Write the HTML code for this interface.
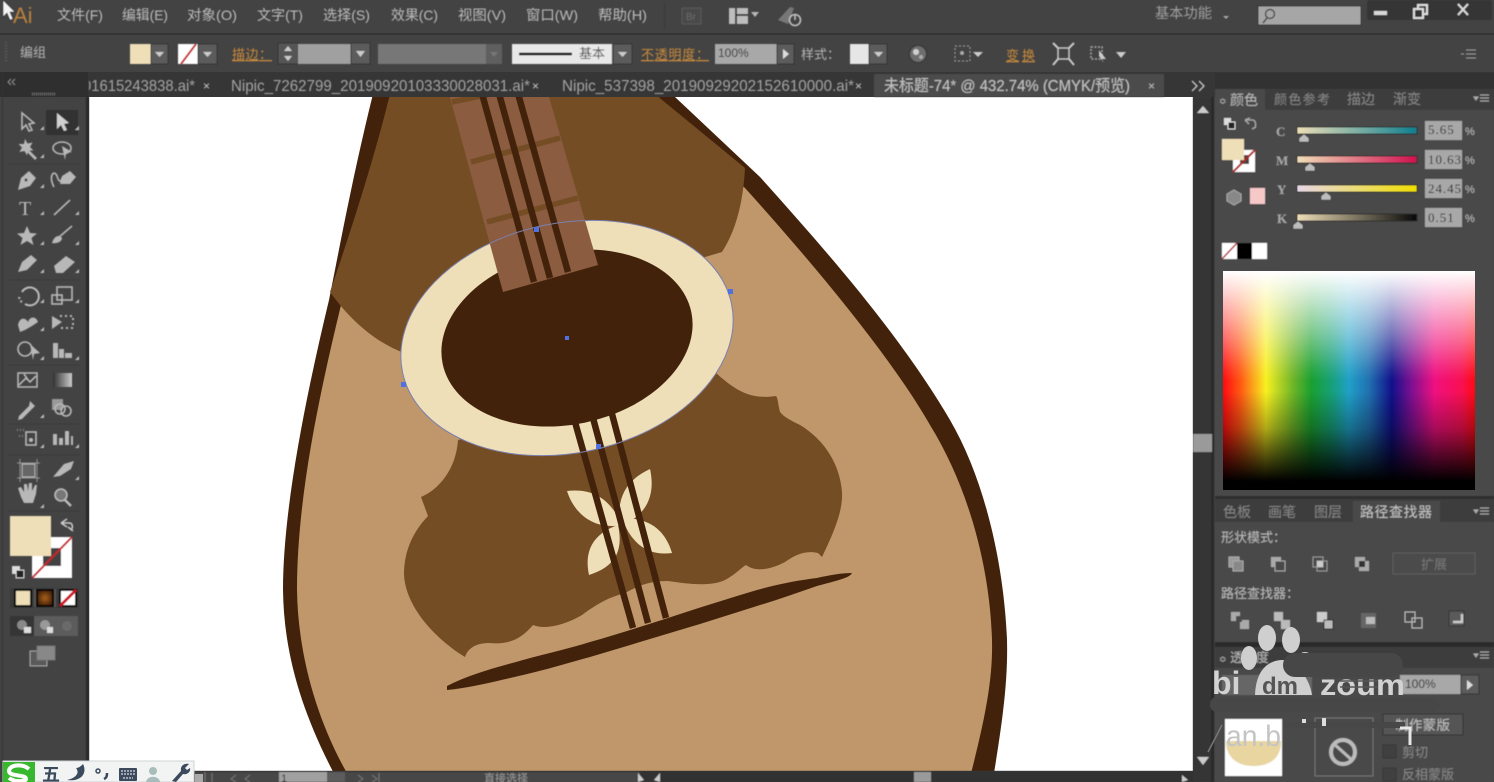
<!DOCTYPE html>
<html><head><meta charset="utf-8"><style>
html,body{margin:0;padding:0;width:1494px;height:782px;overflow:hidden;background:#434343}
svg{display:block}
text{font-family:"Liberation Sans","Noto Sans CJK SC",sans-serif}
.m{font-size:14px;fill:#bcbcbc}
.t{font-size:16px;fill:#a4a4a4}
.s{font-size:13px;fill:#b5b5b5}
.o{font-size:13px;fill:#c98a3c}
.ic{fill:#b8b8b8;stroke:none}
.il{fill:none;stroke:#b8b8b8;stroke-width:1.6}
.n{font-family:"Liberation Serif",serif;font-size:13px;fill:#2a2a2a;letter-spacing:1px}
.l{font-family:"Liberation Serif",serif;font-size:13px;font-weight:bold;fill:#a8a8a8}
.p{fill:#bdbdbd;stroke:#2e2e2e;stroke-width:.6}
</style></head><body>
<svg width="1494" height="782" viewBox="0 0 1494 782" xmlns="http://www.w3.org/2000/svg">
<defs>
<linearGradient id="hue" x1="0" x2="1" y1="0" y2="0">
<stop offset="0" stop-color="#ff0a10"/><stop offset=".07" stop-color="#ff5a14"/><stop offset=".17" stop-color="#f8f020"/><stop offset=".28" stop-color="#6cb428"/><stop offset=".35" stop-color="#1aa030"/><stop offset=".43" stop-color="#16a078"/><stop offset=".5" stop-color="#20a0c8"/><stop offset=".58" stop-color="#2070b0"/><stop offset=".67" stop-color="#10108a"/><stop offset=".75" stop-color="#801090"/><stop offset=".84" stop-color="#f01080"/><stop offset=".95" stop-color="#f81050"/><stop offset="1" stop-color="#ff0a10"/>
</linearGradient>
<linearGradient id="wb" x1="0" x2="0" y1="0" y2="1">
<stop offset="0" stop-color="#fff" stop-opacity="1"/><stop offset=".14" stop-color="#fff" stop-opacity=".72"/><stop offset=".3" stop-color="#fff" stop-opacity=".4"/><stop offset=".45" stop-color="#fff" stop-opacity=".08"/><stop offset=".5" stop-color="#fff" stop-opacity="0"/><stop offset=".55" stop-color="#000" stop-opacity="0"/><stop offset=".72" stop-color="#000" stop-opacity=".3"/><stop offset=".85" stop-color="#000" stop-opacity=".68"/><stop offset=".96" stop-color="#000" stop-opacity="1"/><stop offset="1" stop-color="#000"/>
</linearGradient>
<linearGradient id="c" x1="0" x2="1"><stop offset="0" stop-color="#efdfb8"/><stop offset="1" stop-color="#0f7f90"/></linearGradient>
<linearGradient id="mg" x1="0" x2="1"><stop offset="0" stop-color="#efdfb8"/><stop offset="1" stop-color="#d01050"/></linearGradient>
<linearGradient id="y" x1="0" x2="1"><stop offset="0" stop-color="#e8d8e8"/><stop offset="1" stop-color="#f0e000"/></linearGradient>
<linearGradient id="k" x1="0" x2="1"><stop offset="0" stop-color="#efdfb8"/><stop offset="1" stop-color="#080808"/></linearGradient>
<linearGradient id="gr" x1="0" x2="1"><stop offset="0" stop-color="#333"/><stop offset="1" stop-color="#ccc"/></linearGradient>
<radialGradient id="or"><stop offset="0" stop-color="#a8601c"/><stop offset="1" stop-color="#4a2508"/></radialGradient>
<clipPath id="art"><rect x="89" y="97" width="1104" height="674"/></clipPath>
<clipPath id="tabs"><rect x="89" y="73" width="1120" height="24"/></clipPath>
<clipPath id="wm"><rect x="1213" y="660" width="281" height="40"/></clipPath>
<filter id="b" x="-5%" y="-5%" width="110%" height="110%"><feGaussianBlur stdDeviation=".5"/></filter>
</defs>

<!-- chrome background -->
<rect width="1494" height="782" fill="#434343"/>
<rect y="33" width="1494" height="2" fill="#343434"/>
<rect y="72" width="1494" height="25" fill="#363636"/>
<rect x="0" y="72" width="88" height="25" fill="#2f2f2f"/>

<!-- canvas -->
<rect x="89" y="97" width="1104" height="674" fill="#fff"/>
<g clip-path="url(#art)">
 <path fill="#43220b" d="M374 90C354 170 341 240 329 300C305 400 283 510 283 590C284 660 305 720 340 785L992 785C1003 720 1008 680 1007 640C1004 565 985 480 950 420C900 335 830 255 760 177L675 97L668 90Z"/>
 <path fill="#c0976a" d="M393 90C374 170 353 250 341 305C318 400 297 500 297 590C298 660 320 730 354 785L968 785C985 720 993 680 992 640C990 570 970 490 930 425C890 355 810 260 745 188L725 170L640 90Z"/>
 <!-- upper brown -->
 <path fill="#744d25" d="M391 90C374 160 351 230 330 292C350 320 375 342 404 353L560 300L722 252C735 232 743 205 745 168L650 90Z"/>
 <!-- lower lace -->
 <path fill="#744d25" d="M458 440C456 470 438 490 421 497L428 516C410 535 404 555 404 575C406 610 440 642 465 657C468 648 476 643 490 643C510 645 522 638 533 625C545 630 565 625 582 615C598 603 610 597 625 593C640 585 650 581 668 581C690 584 715 588 730 577C738 572 742 567 746 565C755 572 770 570 785 562C795 555 805 550 818 553L822 557C835 530 843 510 842 492C840 465 825 440 800 425C790 420 784 417 780 412C778 405 778 398 776 396C750 400 735 390 716 373L600 400Z"/>
 <!-- ring -->
 <ellipse cx="567" cy="338" rx="168" ry="115" transform="rotate(-11.7 567 338)" fill="#efdfb8"/>
 <ellipse cx="567" cy="338" rx="127" ry="86.5" transform="rotate(-11.7 567 338)" fill="#43220b"/>
 <!-- flower -->
 <g fill="#efdfb8">
  <path d="M567 491C592 488 610 498 622 525C596 530 575 516 567 491Z"/>
  <path d="M650 469C656 496 646 516 620 526C616 498 626 480 650 469Z"/>
  <path d="M672 553C650 556 632 546 622 518C650 518 665 530 672 553Z"/>
  <path d="M589 575C584 552 592 534 618 525C624 552 614 567 589 575Z"/>
 </g>
 <!-- neck -->
 <path fill="#8b5c3f" d="M448 90L547 90L598 265L503 292Z"/>
 <path stroke="#744d25" stroke-width="5.500" fill="none" d="M471 162L560 138M487 222L578 198M452 102L500 92"/>
 <path stroke="#43220b" stroke-width="6.500" fill="none" d="M481 90L534 282M498 90L550 278M517 90L568 272M575 422L633 628M593 418L648 623M612 414L666 618"/>
 <!-- bridge -->
 <path fill="#43220b" d="M447 686C470 674 498 667 523 660C548 653 568 649 590 642C615 635 640 627 665 619C695 609 727 599 757 590C778 584 800 580 817 578C830 575 842 573 852 573C850 578 835 581 817 586C797 593 777 600 757 606C738 612 719 618 700 624C663 635 627 646 590 657C568 663 545 670 523 675C497 681 470 688 447 690Z"/>
 <!-- selection -->
 <ellipse cx="567" cy="338" rx="168" ry="115" transform="rotate(-11.7 567 338)" fill="none" stroke="#7a80b0" stroke-width="1"/>
 <g fill="#4f72e0"><rect x="534" y="227" width="5" height="5"/><rect x="728" y="289" width="5" height="5"/><rect x="401" y="382" width="5" height="5"/><rect x="596" y="444" width="5" height="5"/><rect x="565" y="336" width="4" height="4"/></g>
</g>

<g filter="url(#b)">
<!-- top menu -->
<text x="13" y="23" fill="#b8803c" style="font-size:22px">Ai</text>
<path d="M3 0V17L7 13L10 20L13 19L10 12L15 12Z" fill="#f4f4f4" stroke="#222" stroke-width=".6"/>
<text class="m" x="57" y="20" textLength="46" lengthAdjust="spacingAndGlyphs">文件(F)</text>
<text class="m" x="122" y="20" textLength="46" lengthAdjust="spacingAndGlyphs">编辑(E)</text>
<text class="m" x="187" y="20" textLength="50" lengthAdjust="spacingAndGlyphs">对象(O)</text>
<text class="m" x="257" y="20" textLength="46" lengthAdjust="spacingAndGlyphs">文字(T)</text>
<text class="m" x="323" y="20" textLength="47" lengthAdjust="spacingAndGlyphs">选择(S)</text>
<text class="m" x="391" y="20" textLength="47" lengthAdjust="spacingAndGlyphs">效果(C)</text>
<text class="m" x="458" y="20" textLength="48" lengthAdjust="spacingAndGlyphs">视图(V)</text>
<text class="m" x="526" y="20" textLength="52" lengthAdjust="spacingAndGlyphs">窗口(W)</text>
<text class="m" x="598" y="20" textLength="49" lengthAdjust="spacingAndGlyphs">帮助(H)</text>
<rect x="664" y="4" width="1" height="24" fill="#393939"/>
<rect x="682" y="8" width="19" height="16" fill="#4a4a4a" stroke="#5a5a5a"/><text x="686" y="20" fill="#6a6a6a" style="font-size:10px">Br</text>
<rect x="729" y="8" width="19" height="16" fill="#bdbdbd"/><path d="M736 8V24M736 15H748" stroke="#3a3a3a" stroke-width="2"/><path d="M751 12H759L755 17Z" fill="#b8b8b8"/>
<path d="M778 20L790 7L794 8L788 24Z" fill="#777"/><circle cx="795" cy="20" r="5.5" fill="none" stroke="#c0c0c0" stroke-width="1.6"/><path d="M795 14V20" stroke="#c0c0c0" stroke-width="1.6"/>
<text x="1155" y="18" fill="#a0a0a0" style="font-size:14px" textLength="57" lengthAdjust="spacingAndGlyphs">基本功能</text>
<path d="M1223 16H1229L1226 19Z" fill="#aaa"/>
<rect x="1258" y="6" width="103" height="19" fill="#a6a6a6" stroke="#333"/>
<circle cx="1270" cy="14" r="4.5" fill="none" stroke="#333" stroke-width="1.2"/><path d="M1267 18L1263 23" stroke="#333" stroke-width="1.4"/>
<rect x="1367" y="0" width="125" height="20" rx="3" fill="#363636"/>
<rect x="1374" y="11" width="13" height="4" fill="#d8d8d8"/>
<rect x="1418" y="5" width="9" height="9" fill="none" stroke="#ddd" stroke-width="2"/><rect x="1414" y="9" width="9" height="9" fill="#363636" stroke="#ddd" stroke-width="2"/>
<path d="M1458 4L1468 15M1468 4L1458 15" stroke="#ddd" stroke-width="2"/>

<!-- control bar -->
<path d="M6 42V62" stroke="#5a5a5a" stroke-width="3" stroke-dasharray="1 2"/>
<text class="s" x="20" y="57">编组</text>
<rect x="130" y="44" width="21" height="20" fill="#efdfb8"/>
<rect x="151" y="44" width="17" height="20" fill="#5b5b5b" stroke="#333"/><path d="M155 52H164L159.500 57Z" fill="#ccc"/>
<rect x="178" y="44" width="20" height="20" fill="#fff"/><path d="M181 64L196 44" stroke="#c8202c" stroke-width="2"/>
<rect x="198" y="44" width="19" height="20" fill="#5b5b5b" stroke="#333"/><path d="M203 52H212L207.500 57Z" fill="#ccc"/>
<text class="o" x="232" y="59" textLength="40" text-decoration="underline">描边：</text>
<rect x="278" y="43" width="20" height="21" fill="#555" stroke="#333"/><path d="M284 51H292L288 46ZM284 56H292L288 61Z" fill="#ccc"/>
<rect x="298" y="44" width="53" height="20" fill="#a0a0a0"/>
<rect x="351" y="43" width="19" height="21" fill="#5b5b5b" stroke="#333"/><path d="M356 51H365L360.500 57Z" fill="#ccc"/>
<rect x="378" y="44" width="108" height="20" fill="#777"/>
<rect x="486" y="44" width="16" height="20" fill="#5e5e5e"/><path d="M490 52H498L494 57Z" fill="#777"/>
<rect x="512" y="44" width="100" height="20" fill="#e8e8e8"/><path d="M519 54H572" stroke="#000" stroke-width="2.500"/><text x="579" y="58" fill="#444" style="font-size:13px">基本</text>
<rect x="613" y="44" width="19" height="20" fill="#5b5b5b" stroke="#333"/><path d="M618 52H627L622.500 57Z" fill="#ccc"/>
<text class="o" x="641" y="59" textLength="68" text-decoration="underline">不透明度：</text>
<rect x="715" y="44" width="62" height="20" fill="#a8a8a8"/><text x="718" y="57" fill="#2a2a2a" style="font-size:12px">100%</text>
<rect x="777" y="44" width="17" height="20" fill="#5b5b5b" stroke="#333"/><path d="M783 49V59L789 54Z" fill="#ddd"/>
<text class="s" x="801" y="59">样式：</text>
<rect x="850" y="44" width="19" height="20" fill="#e6e6e6"/><rect x="869" y="44" width="18" height="20" fill="#5b5b5b" stroke="#333"/><path d="M874 52H883L878.500 57Z" fill="#ccc"/>
<circle cx="918" cy="54" r="8.500" fill="#6e6e6e" stroke="#333"/><circle cx="916" cy="52" r="3" fill="#d0d0d0"/><circle cx="921" cy="57" r="2" fill="#aaa"/>
<rect x="955" y="46" width="15" height="15" fill="none" stroke="#aaa" stroke-dasharray="2 2"/><circle cx="962" cy="53" r="2" fill="#aaa"/><path d="M973 52H983L978 57Z" fill="#ccc"/>
<text class="o" x="1006" y="60" textLength="29" text-decoration="underline">变换</text>
<rect x="1058" y="48" width="11" height="11" fill="none" stroke="#ccc" stroke-width="1.500"/><path d="M1053 43L1058 48M1074 43L1069 48M1053 65L1058 59M1074 65L1069 59" stroke="#ccc" stroke-width="2"/>
<rect x="1091" y="47" width="11" height="12" fill="none" stroke="#aaa" stroke-width="1.500" stroke-dasharray="2 1.500"/><path d="M1099 50L1106 59L1102 59L1104 63L1099 56Z" fill="#ccc"/><path d="M1116 52H1126L1121 58Z" fill="#ccc"/>
<path d="M1461 54H1464M1466 50H1476M1466 54H1476M1466 58H1476" stroke="#aaa"/>

<!-- tabs -->
<g clip-path="url(#tabs)">
<rect x="874" y="74" width="290" height="23" fill="#4c4c4c"/>
<text class="t" x="83" y="91" textLength="112" lengthAdjust="spacingAndGlyphs">01615243838.ai*</text>
<text x="203" y="90" fill="#ccc" style="font-size:12px">×</text>
<text class="t" x="231" y="91" textLength="299" lengthAdjust="spacingAndGlyphs">Nipic_7262799_20190920103330028031.ai*</text>
<text x="532" y="90" fill="#ccc" style="font-size:12px">×</text>
<text class="t" x="562" y="91" textLength="292" lengthAdjust="spacingAndGlyphs">Nipic_537398_20190929202152610000.ai*</text>
<text x="855" y="90" fill="#ccc" style="font-size:12px">×</text>
<text class="t" x="884" y="91" textLength="246" lengthAdjust="spacingAndGlyphs" style="fill:#c2c2c2">未标题-74* @ 432.74% (CMYK/预览)</text>
<text x="1148" y="90" fill="#bbb" style="font-size:12px">×</text>
<path d="M1192 81L1197 86L1192 91M1199 81L1204 86L1199 91" fill="none" stroke="#ccc" stroke-width="1.300"/>
</g>
<path d="M11 79L8 82L11 85M15 79L12 82L15 85" fill="none" stroke="#999"/>
<path d="M32 94H55" stroke="#777" stroke-width="3" stroke-dasharray="1 1"/>
<path d="M1487 79L1490 82L1487 85M1483 79L1486 82L1483 85" fill="none" stroke="#999"/>

<!-- left toolbar -->
<rect x="2" y="73" width="1" height="709" fill="#333"/>
<rect x="86" y="97" width="3" height="674" fill="#2a2a2a"/>
<rect x="46" y="110" width="32" height="25" fill="#333"/>
<path class="il" d="M22 113V129L26 125L29 131L32 130L29 124L34 123Z" stroke="#ccc"/>
<path d="M57 113V129L61 125L64 131L67 130L64 124L69 123Z" fill="#d0d0d0"/>
<path class="ic" d="M25 139l2.500 4.500 5-1-2.500 4.500 3.500 3.500-5.500 0-1 5-2.500-4.500-5 1 2.500-4.500-3.500-3.500 5.500 0zM29 150l8 8-2 2-8-8z"/>
<ellipse class="il" cx="62" cy="148" rx="9" ry="6"/><path class="ic" d="M62 146L72 152L66 153L65 160Z"/>
<path class="ic" d="M18 190L21 178L29 171L36 178L30 186Z"/><circle cx="26" cy="180" r="1.500" fill="#434343"/>
<path class="il" d="M54 187C48 176 54 169 57 176C59 183 61 182 62 178"/><path class="ic" d="M60 184L62 176L70 171L76 177L70 184Z"/>
<text x="19" y="215" style="font-family:'Liberation Serif',serif;font-size:20px" fill="#bbb">T</text>
<path class="il" d="M54 215L70 200"/>
<path class="ic" d="M27 226l3 7 7 .5-5.500 4.500 2 7-6.500-4-6.500 4 2-7-5.500-4.500 7-.5z"/>
<path class="il" d="M58 238L72 226"/><path class="ic" d="M52 243C54 236 59 234 62 238C62 242 56 244 52 243Z"/>
<path class="ic" d="M18 272L22 262L31 255L37 260L27 270Z"/>
<path class="ic" d="M54 266L66 256L75 262L63 273L56 273Z"/>
<path d="M22 292A9 9 0 1 1 25 304" fill="none" stroke="#bbb" stroke-width="2"/><path d="M19 297A9 9 0 0 0 23 303" fill="none" stroke="#bbb" stroke-dasharray="2 2" stroke-width="2"/>
<rect x="57" y="287" width="15" height="13" class="il"/><rect x="52" y="295" width="10" height="9" class="il"/>
<path class="ic" d="M18 325C20 316 26 318 28 322C30 316 36 316 38 322L32 326L25 330L20 332Z"/>
<path class="ic" d="M52 316L62 322L52 329Z"/><path d="M60 316H73V328H60" fill="none" stroke="#bbb" stroke-dasharray="2 3" stroke-width="2"/>
<circle class="il" cx="25" cy="349" r="7"/><path class="ic" d="M30 344L40 353L34 354L33 360Z"/>
<path class="ic" d="M53 343H58V358H53ZM59 349H64V358H59ZM65 353H72V358H65Z"/>
<rect x="18" y="373" width="19" height="14" fill="none" stroke="#bbb" stroke-width="1.500"/><path d="M19 385L26 378L30 382L36 376M24 374L28 380" class="il"/>
<rect x="53" y="373" width="19" height="14" fill="url(#gr)"/>
<path class="ic" d="M30 401L35 406L32 409L22 419L18 420L19 416L29 406Z"/>
<rect x="52" y="399" width="11" height="11" fill="#999"/><circle cx="60" cy="409" r="5" class="il"/><circle cx="66" cy="411" r="5" class="il"/>
<rect x="26" y="432" width="10" height="13" class="il"/><circle cx="31" cy="440" r="2" fill="#bbb"/><path d="M17 430H24M19 436H23" stroke="#888" stroke-dasharray="1 2" stroke-width="2"/>
<path class="ic" d="M53 434h4v11h-4zM59 438h4v7h-4zM65 431h4v14h-4zM71 436h2v9h-2z"/>
<rect x="22" y="464" width="13" height="13" fill="#666" stroke="#bbb"/><path d="M20 459V482M37 459V482M17 463H40M17 478H40" stroke="#aaa" stroke-width=".8"/>
<path class="ic" d="M53 477L64 464L74 461L71 469L60 476Z"/>
<path class="ic" d="M21 497L18 488L21 487L24 492L24 484H27L28 491L29 483H32L32 491L35 485H37L36 494L33 503H24Z"/>
<circle cx="61" cy="495" r="6" fill="#777" stroke="#bbb" stroke-width="1.600"/><path d="M65 500L71 506" stroke="#bbb" stroke-width="2.500"/>
<path fill="#bbb" d="M40 130h4v-4zM75 130h4v-4zM40 158h4v-4zM40 188h4v-4zM75 215h4v-4zM40 215h4v-4zM40 245h4v-4zM75 245h4v-4zM40 273h4v-4zM75 273h4v-4zM40 303h4v-4zM75 303h4v-4zM40 331h4v-4zM40 360h4v-4zM75 360h4v-4zM40 418h4v-4zM40 448h4v-4zM75 448h4v-4zM75 480h4v-4zM40 508h4v-4z"/>
<path d="M8 164H80M8 280H80M8 365H80M8 424H80M8 455H80M8 511H80" stroke="#3a3a3a"/>
<rect x="32" y="537" width="40" height="41" fill="#fff"/><rect x="43" y="548" width="18" height="18" fill="#434343"/><path d="M32 578L72 537" stroke="#c8202c" stroke-width="2"/>
<rect x="10" y="516" width="41" height="40" fill="#efdfb8"/>
<path d="M61 523L67 519M61 523L67 527M61 523H70C73 524 73 528 71 530M73 531L68 527" stroke="#ccc" fill="none" stroke-width="1.500"/>
<rect x="12" y="566" width="8" height="8" fill="#ddd"/><rect x="16" y="570" width="8" height="8" fill="#222" stroke="#ddd"/>
<rect x="10" y="588" width="69" height="20" fill="#3a3a3a"/><rect x="34" y="589" width="22" height="18" fill="#555"/>
<rect x="15" y="590" width="16" height="16" fill="#efdfb8" stroke="#000" stroke-width="2"/>
<rect x="37" y="590" width="16" height="16" fill="url(#or)" stroke="#000" stroke-width="2"/>
<rect x="60" y="590" width="16" height="16" fill="#fff" stroke="#000" stroke-width="2"/><path d="M60 606L76 590" stroke="#d01020" stroke-width="3"/>
<rect x="10" y="616" width="24" height="20" fill="#363636"/><rect x="34" y="616" width="44" height="20" fill="#5c5c5c"/>
<circle cx="22" cy="625" r="5" fill="#888"/><rect x="24" y="627" width="7" height="6" fill="#ddd"/>
<circle cx="45" cy="625" r="5" fill="#999"/><rect x="47" y="627" width="6" height="6" fill="#ddd"/><circle cx="67" cy="626" r="5" fill="#6a6a6a"/>
<rect x="30" y="651" width="17" height="15" fill="#5a5a5a" stroke="#aaa"/><rect x="37" y="646" width="18" height="14" fill="#888" stroke="#777"/>
</g>

<g filter="url(#b)">
<!-- right scroll -->
<rect x="1193" y="97" width="20" height="685" fill="#343434"/>
<rect x="1211" y="97" width="3" height="685" fill="#2c2c2c"/>
<path d="M1197 113L1203 106L1209 113Z" fill="#ccc"/>
<rect x="1193" y="434" width="19" height="18" fill="#9a9a9a"/>
<path d="M1197 757L1203 765L1209 757Z" fill="#ccc"/>

<!-- color panel -->
<rect x="1215" y="73" width="279" height="16" fill="#333"/>
<rect x="1215" y="89" width="279" height="21" fill="#3c3c3c"/>
<rect x="1215" y="89" width="50" height="21" fill="#484848"/>
<rect x="1215" y="110" width="279" height="387" fill="#484848"/>
<text x="1219" y="104" fill="#bbb" style="font-size:9px">≎</text>
<text x="1230" y="105" style="font-size:14px" fill="#b8b8b8">颜色</text>
<text x="1274" y="104" style="font-size:13px" fill="#858585" textLength="56">颜色参考</text>
<text x="1347" y="104" style="font-size:14px" fill="#858585">描边</text>
<text x="1393" y="104" style="font-size:14px" fill="#858585">渐变</text>
<path d="M1474 97H1478L1476 100ZM1480 95H1489M1480 98H1489M1480 101H1489" stroke="#aaa" fill="#aaa"/>
<rect x="1224" y="118" width="7" height="7" fill="#ddd"/><rect x="1228" y="122" width="7" height="7" fill="#222" stroke="#ddd"/>
<path d="M1245 120L1250 118M1245 120L1249 124M1245 120H1253C1256 121 1256 125 1255 127M1256 127L1252 129" stroke="#aaa" stroke-width="1.300" fill="none"/>
<rect x="1233" y="150" width="22" height="22" fill="#fff"/><rect x="1240" y="155" width="9" height="9" fill="#434343"/><path d="M1233 172L1255 150" stroke="#b02020" stroke-width="2"/>
<rect x="1222" y="139" width="22" height="21" fill="#efdfb8"/>
<path d="M1234 190L1241 194V201L1234 205L1227 201V194Z" fill="#888" stroke="#aaa"/>
<rect x="1250" y="188" width="15" height="16" fill="#f6c8c8"/>
<text class="l" x="1276" y="136">C</text><text class="l" x="1276" y="165">M</text><text class="l" x="1277" y="194">Y</text><text class="l" x="1277" y="223">K</text>
<rect x="1297" y="127" width="120" height="7" fill="url(#c)" stroke="#2a2a2a"/>
<rect x="1297" y="156" width="120" height="7" fill="url(#mg)" stroke="#2a2a2a"/>
<rect x="1297" y="185" width="120" height="7" fill="url(#y)" stroke="#2a2a2a"/>
<rect x="1297" y="214" width="120" height="7" fill="url(#k)" stroke="#2a2a2a"/>
<path class="p" d="M1304 134L1309 138V142H1299V138Z"/><path class="p" d="M1310 163L1315 167V171H1305V167Z"/><path class="p" d="M1326 192L1331 196V200H1321V196Z"/><path class="p" d="M1298 221L1303 225V229H1293V225Z"/>
<rect x="1425" y="121" width="37" height="19" fill="#a8a8a8"/><rect x="1425" y="150" width="37" height="19" fill="#a8a8a8"/><rect x="1425" y="179" width="37" height="19" fill="#a8a8a8"/><rect x="1425" y="208" width="37" height="19" fill="#a8a8a8"/>
<text class="n" x="1428" y="134">5.65</text><text class="n" x="1428" y="164" textLength="34">10.63</text><text class="n" x="1428" y="193" textLength="34">24.45</text><text class="n" x="1428" y="222">0.51</text>
<text x="1465" y="135" fill="#bbb" style="font-size:11px">%</text><text x="1465" y="164" fill="#bbb" style="font-size:11px">%</text><text x="1465" y="193" fill="#bbb" style="font-size:11px">%</text><text x="1465" y="222" fill="#bbb" style="font-size:11px">%</text>
<rect x="1222" y="243" width="15" height="16" fill="#fff"/><path d="M1222 259L1237 243" stroke="#b02020" stroke-width="1.500"/><rect x="1237" y="243" width="15" height="16" fill="#000"/><rect x="1252" y="243" width="15" height="16" fill="#fff"/>
<rect x="1215" y="496" width="279" height="3" fill="#2e2e2e"/>

<!-- pathfinder -->
<rect x="1215" y="499" width="279" height="23" fill="#3c3c3c"/>
<rect x="1353" y="501" width="87" height="21" fill="#494949"/>
<rect x="1215" y="522" width="279" height="121" fill="#484848"/>
<text x="1223" y="517" style="font-size:14px" fill="#858585">色板</text>
<text x="1268" y="517" style="font-size:14px" fill="#858585">画笔</text>
<text x="1314" y="517" style="font-size:14px" fill="#858585">图层</text>
<text x="1360" y="517" style="font-size:14px" fill="#c2c2c2" textLength="72">路径查找器</text>
<path d="M1474 510H1478L1476 513ZM1480 508H1489M1480 511H1489M1480 514H1489" stroke="#aaa" fill="#aaa"/>
<text x="1221" y="542" style="font-size:13px" fill="#b8b8b8">形状模式：</text>
<text x="1221" y="598" style="font-size:13px" fill="#b8b8b8">路径查找器：</text>
<rect x="1229" y="557" width="10" height="10" fill="#999" stroke="#aaa"/><rect x="1233" y="561" width="10" height="10" fill="#888" stroke="#aaa"/>
<rect x="1271" y="557" width="10" height="10" fill="#aaa"/><rect x="1275" y="561" width="10" height="10" fill="#484848" stroke="#aaa"/>
<rect x="1313" y="557" width="10" height="10" fill="none" stroke="#999"/><rect x="1317" y="561" width="10" height="10" fill="none" stroke="#999"/><rect x="1317" y="561" width="6" height="6" fill="#ccc"/>
<rect x="1355" y="557" width="10" height="10" fill="#aaa"/><rect x="1359" y="561" width="10" height="10" fill="#aaa"/><rect x="1359" y="561" width="6" height="6" fill="#333"/>
<rect x="1393" y="553" width="82" height="21" fill="#4c4c4c" stroke="#5e5e5e"/><text x="1421" y="569" style="font-size:13px" fill="#777">扩展</text>
<rect x="1231" y="612" width="9" height="9" fill="#aaa"/><rect x="1240" y="620" width="9" height="9" fill="#aaa"/><rect x="1236" y="616" width="6" height="6" fill="#484848"/>
<rect x="1274" y="612" width="9" height="9" fill="#bbb"/><rect x="1281" y="620" width="9" height="9" fill="#bbb"/>
<rect x="1317" y="612" width="10" height="10" fill="#ccc"/><rect x="1324" y="620" width="9" height="9" fill="#bbb" stroke="#222"/>
<rect x="1361" y="613" width="15" height="15" fill="#666"/><rect x="1366" y="617" width="9" height="7" fill="#bbb"/>
<rect x="1405" y="612" width="10" height="10" fill="none" stroke="#bbb"/><rect x="1412" y="618" width="10" height="10" fill="none" stroke="#bbb"/>
<rect x="1449" y="611" width="15" height="15" fill="#5a5a5a" stroke="#333"/><path d="M1453 622H1462V614" fill="none" stroke="#ccc" stroke-width="2.500"/>
<rect x="1215" y="642" width="279" height="5" fill="#2a2a2a"/>

<!-- transparency -->
<rect x="1215" y="647" width="279" height="21" fill="#3c3c3c"/>
<rect x="1215" y="668" width="279" height="114" fill="#484848"/>
<text x="1219" y="662" fill="#bbb" style="font-size:9px">≎</text>
<text x="1230" y="662" style="font-size:13px" fill="#b8b8b8">透明度</text>
<path d="M1474 654H1478L1476 657ZM1480 652H1489M1480 655H1489M1480 658H1489" stroke="#aaa" fill="#aaa"/>
<rect x="1222" y="675" width="90" height="20" fill="#666"/>
<rect x="1400" y="675" width="61" height="19" fill="#a8a8a8"/><text x="1405" y="688" style="font-size:12px" fill="#2a2a2a">100%</text>
<rect x="1461" y="675" width="18" height="19" fill="#5b5b5b" stroke="#333"/><path d="M1467 680V690L1473 685Z" fill="#ddd"/>
<rect x="1225" y="719" width="57" height="57" fill="#fff"/>
<path d="M1226 741H1281C1281 760 1268 766 1253 766C1238 766 1226 758 1226 741Z" fill="#e8d5a0"/>
<rect x="1315" y="718" width="58" height="58" fill="none" stroke="#777"/>
<circle cx="1343" cy="752" r="12" fill="none" stroke="#bbb" stroke-width="4"/><path d="M1333 743L1353 761" stroke="#bbb" stroke-width="3"/>
<rect x="1383" y="714" width="80" height="21" fill="#555" stroke="#333"/><text x="1395" y="730" style="font-size:13.500px" fill="#c0c0c0" textLength="55">制作蒙版</text>
<rect x="1383" y="745" width="13" height="13" fill="#3f3f3f" stroke="#363636"/><text x="1402" y="757" style="font-size:13px" fill="#888">剪切</text>
<rect x="1383" y="768" width="13" height="13" fill="#3f3f3f" stroke="#363636"/><text x="1402" y="779" style="font-size:13px" fill="#888">反相蒙版</text>

<!-- bottom bar -->
<rect x="89" y="771" width="1104" height="11" fill="#333"/>
<rect x="194" y="772" width="446" height="10" fill="#474747"/>
<path d="M205 772V782M212 773V782M236 775L231 779L236 782M250 775L245 779L250 782" stroke="#777" fill="none"/>
<rect x="279" y="772" width="48" height="10" fill="#a0a0a0"/><text x="281" y="782" style="font-size:11px" fill="#333">1</text>
<rect x="327" y="772" width="18" height="10" fill="#5b5b5b"/>
<path d="M358 775L363 779L358 782M372 775L377 779L372 782M379 773V782" stroke="#777" fill="none"/>
<text x="484" y="782" style="font-size:11px" fill="#999">直接选择</text>
<rect x="914" y="772" width="17" height="10" fill="#9a9a9a"/>
<path d="M638 773L644 780L638 782ZM660 773L654 780L660 782ZM1182 775L1188 780L1182 782Z" fill="#ccc"/>
</g>

<!-- spectrum -->
<rect x="1223" y="271" width="252" height="219" fill="url(#hue)"/>
<rect x="1223" y="271" width="252" height="219" fill="url(#wb)"/>

<!-- watermark -->
<g>
<g fill="#cfcfcf"><ellipse cx="1267" cy="638" rx="9" ry="13"/><ellipse cx="1291" cy="640" rx="9" ry="13"/><ellipse cx="1249" cy="658" rx="8" ry="12"/><ellipse cx="1305" cy="660" rx="8" ry="8"/><path d="M1255 695C1256 668 1270 660 1283 660C1298 662 1310 680 1312 695Z"/></g>
<g clip-path="url(#wm)"><text x="1212" y="694" style="font-size:32px;font-weight:bold" fill="#d2d2d2">bi</text><text x="1262" y="694" style="font-size:24px;font-weight:bold" fill="#555">dm</text><text x="1320" y="695" style="font-size:30px;font-weight:bold" fill="#d2d2d2" textLength="85" lengthAdjust="spacingAndGlyphs">zoum</text></g>
<path d="M1340 681H1378M1340 687H1378" stroke="#555" stroke-width="1.500"/>
<rect x="1283" y="653" width="120" height="24" rx="12" fill="#474747"/>
<rect x="1210" y="697" width="230" height="15" rx="7" fill="#474747"/>
<rect x="1285" y="722" width="120" height="6" fill="#474747"/>
<text x="1226" y="746" style="font-size:30px" fill="#c4c4c4" textLength="55" lengthAdjust="spacingAndGlyphs">an.b</text>
<path d="M1222 725L1208 752" stroke="#777" stroke-width="1.500"/>
<path d="M1400 728H1410V745" fill="none" stroke="#e6e6e6" stroke-width="3"/>
<rect x="1302" y="719" width="4" height="4" fill="#ddd"/><rect x="1322" y="718" width="4" height="8" fill="#ddd"/>
</g>

<!-- IME bar -->
<rect x="3" y="761" width="191" height="21" fill="#f2f4f4" stroke="#cfd4d4"/>
<rect x="3" y="762" width="32" height="20" fill="#37b82e"/>
<path d="M29 769C22 763 9 765 9 771C9 777 26 774 26 779C26 782 14 782 9 778" fill="none" stroke="#fff" stroke-width="4"/>
<text x="42" y="781" style="font-size:18px;font-weight:bold" fill="#3b4a5c">五</text>
<path d="M83 764C88 774 80 782 67 780C76 778 80 773 76 768C79 768 81 766 83 764Z" fill="#3b4a5c"/>
<circle cx="98" cy="771" r="2" fill="none" stroke="#3b4a5c" stroke-width="1.500"/><path d="M107 773C107 777 106 778 104 779" stroke="#3b4a5c" stroke-width="2.500" fill="none"/>
<rect x="119" y="768" width="18" height="13" rx="1" fill="#3b4a5c"/><path d="M121 771H135M121 774H135M123 778H133" stroke="#fff" stroke-dasharray="2 1"/>
<circle cx="153" cy="771" r="4" fill="#a9bcbc"/><path d="M146 782C147 775 159 775 160 782Z" fill="#a9bcbc"/>
<path d="M172 781L181 771C180 766 184 763 189 764L185 768L187 770L190 768C191 772 187 775 183 774L176 782Z" fill="#3b4a5c"/>
<rect x="195" y="774" width="8" height="8" fill="#aaa"/>
</svg>
</body></html>
